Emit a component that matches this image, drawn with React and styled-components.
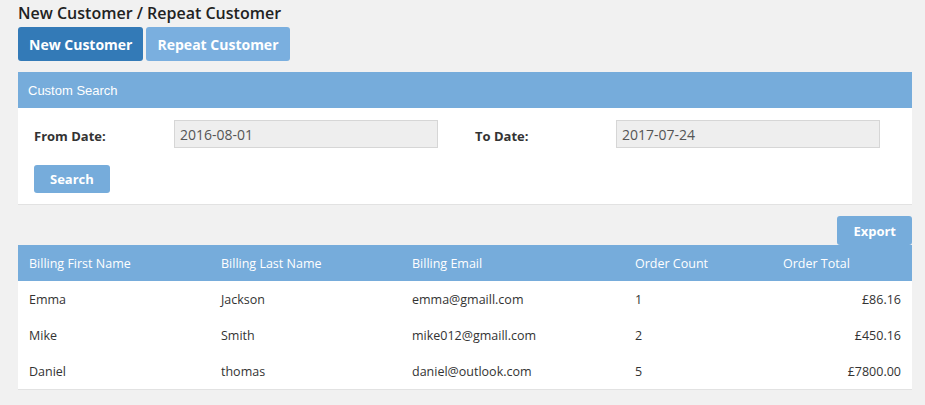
import React from 'react';
import styled, { createGlobalStyle } from 'styled-components';

const GlobalStyle = createGlobalStyle`
  body {
    margin: 0;
    background: #f1f1f1;
    font-family: "Open Sans", "Noto Sans", sans-serif;
    color: #333;
  }
`;

const Page = styled.div`
  padding: 3px 13px 0 18px;
`;

const Title = styled.h1`
  margin: 0 0 4px;
  font-size: 16px;
  font-weight: 600;
  line-height: 20px;
  color: #222;
`;

const Tabs = styled.div`
  display: flex;
  gap: 3px;
  margin-bottom: 11px;
`;

const TabButton = styled.button`
  height: 34px;
  padding: 0 11px;
  border: 0;
  border-radius: 3px;
  background: ${p => (p.active ? '#337ab7' : '#7aafdf')};
  color: #fff;
  font-family: inherit;
  font-size: 14px;
  font-weight: 700;
`;

const Panel = styled.section`
  background: #fff;
  border-bottom: 1px solid #e2e2e2;
`;

const PanelHeading = styled.div`
  height: 36px;
  display: flex;
  align-items: center;
  padding: 0 10px;
  background: #76acdb;
  color: #fff;
  font-family: "Liberation Sans", Arial, sans-serif;
  font-size: 13px;
`;

const PanelBody = styled.div`
  padding: 12px 16px 11px 16px;
`;

const DateGrid = styled.div`
  display: grid;
  grid-template-columns: 140px 264px 37px 141px 264px;
  align-items: center;
`;

const Label = styled.label`
  font-size: 13px;
  font-weight: 700;
  padding-top: 4px;
  color: #333;
`;

const DateInput = styled.div`
  height: 28px;
  box-sizing: border-box;
  border: 1px solid #d6d6d6;
  background: #eee;
  padding: 0 5px;
  display: flex;
  align-items: center;
  font-size: 14px;
  color: #555;
`;

const SmallButton = styled.button`
  height: ${p => (p.tall ? '29px' : '28px')};
  padding: 0 16px;
  border: 0;
  border-radius: 3px;
  background: #76acdb;
  color: #fff;
  font-family: inherit;
  font-size: 13px;
  font-weight: 700;
`;

const SearchRow = styled.div`
  margin-top: 17px;
`;

const Toolbar = styled.div`
  display: flex;
  justify-content: flex-end;
  margin-top: 11px;
`;

const Table = styled.table`
  width: 100%;
  border-collapse: collapse;
  table-layout: fixed;
  background: #fff;
  border-bottom: 1px solid #e2e2e2;
  font-size: 12.5px;
`;

const Th = styled.th`
  height: 36px;
  padding: 0 11px;
  background: #76acdb;
  color: #fff;
  font-weight: 400;
  text-align: left;
`;

const Td = styled.td`
  height: 36px;
  padding: 0 11px;
  text-align: ${p => (p.right ? 'right' : 'left')};
  color: #333;
`;

const rows = [
  ['Emma', 'Jackson', 'emma@gmaill.com', '1', '£86.16'],
  ['Mike', 'Smith', 'mike012@gmaill.com', '2', '£450.16'],
  ['Daniel', 'thomas', 'daniel@outlook.com', '5', '£7800.00'],
];

export default function App() {
  return (
    <Page>
      <GlobalStyle />
      <Title>New Customer / Repeat Customer</Title>
      <Tabs>
        <TabButton active>New Customer</TabButton>
        <TabButton>Repeat Customer</TabButton>
      </Tabs>
      <Panel>
        <PanelHeading>Custom Search</PanelHeading>
        <PanelBody>
          <DateGrid>
            <Label>From Date:</Label>
            <DateInput>2016-08-01</DateInput>
            <span />
            <Label>To Date:</Label>
            <DateInput>2017-07-24</DateInput>
          </DateGrid>
          <SearchRow>
            <SmallButton>Search</SmallButton>
          </SearchRow>
        </PanelBody>
      </Panel>
      <Toolbar>
        <SmallButton tall>Export</SmallButton>
      </Toolbar>
      <Table>
        <colgroup>
          <col style={{ width: 192 }} />
          <col style={{ width: 191 }} />
          <col style={{ width: 223 }} />
          <col style={{ width: 148 }} />
          <col />
        </colgroup>
        <thead>
          <tr>
            <Th>Billing First Name</Th>
            <Th>Billing Last Name</Th>
            <Th>Billing Email</Th>
            <Th>Order Count</Th>
            <Th>Order Total</Th>
          </tr>
        </thead>
        <tbody>
          {rows.map(r => (
            <tr key={r[0]}>
              <Td>{r[0]}</Td>
              <Td>{r[1]}</Td>
              <Td>{r[2]}</Td>
              <Td>{r[3]}</Td>
              <Td right>{r[4]}</Td>
            </tr>
          ))}
        </tbody>
      </Table>
    </Page>
  );
}
